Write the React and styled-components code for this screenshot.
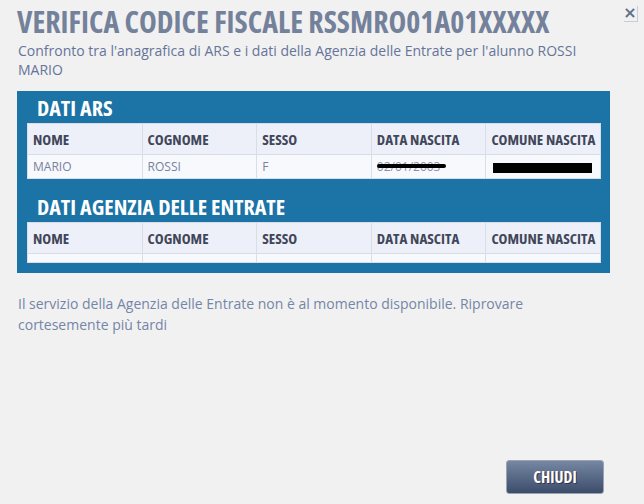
import React from 'react';
import styled, { createGlobalStyle } from 'styled-components';

const GlobalStyle = createGlobalStyle`
  html, body {
    margin: 0;
    padding: 0;
    background: #f1f1f1;
  }
  body {
    font-family: "Open Sans", "Liberation Sans", sans-serif;
  }
`;

const Dialog = styled.div`
  width: 644px;
  height: 504px;
  box-sizing: border-box;
  padding: 3px 17px 0 17px;
  display: flex;
  flex-direction: column;
  position: relative;
`;

const Condensed = `
  font-family: "Open Sans", "DejaVu Sans Condensed", sans-serif;
  font-stretch: 75%;
  font-weight: 700;
`;

const Title = styled.h1`
  ${Condensed};
  margin: 0;
  font-size: 30px;
  line-height: 38px;
  color: #74819a;
`;

const CloseButton = styled.button`
  position: absolute;
  top: 5px;
  right: 7px;
  width: 14px;
  height: 16px;
  padding: 0;
  border: none;
  background: transparent;
  box-shadow: 1px 1px 0 #c9cdd6;
  color: #5f6f8a;
  font-family: "DejaVu Sans", sans-serif;
  font-weight: 700;
  font-size: 16px;
  line-height: 14px;
`;

const Subtitle = styled.p`
  margin: 0 0 12px 1px;
  font-size: 14px;
  line-height: 19px;
  color: #66749a;
  padding-right: 20px;
`;

const BluePanel = styled.div`
  width: 593px;
  background: #1b73a6;
  padding: 0 10px 10px 10px;
  box-sizing: border-box;
`;

const SectionTitle = styled.h2`
  ${Condensed};
  margin: 0;
  padding-left: 10px;
  font-size: 22px;
  line-height: 32px;
  color: #fff;
  margin-top: ${(p) => (p.$gap ? '11px' : '0')};
`;

const Table = styled.table`
  width: 574px;
  border-collapse: collapse;
  table-layout: fixed;
`;

const Th = styled.th`
  ${Condensed};
  text-align: left;
  font-size: 15px;
  height: 30px;
  padding: 0 5px;
  color: #41465a;
  background: #edf0f8;
  border: 1px solid #d9dde8;
  white-space: nowrap;
`;

const Td = styled.td`
  font-size: 12px;
  height: ${(p) => (p.$empty ? '8px' : '23px')};
  padding: 0 5px;
  color: #77819f;
  background: #f8f9fc;
  border: 1px solid #dadee8;
  white-space: nowrap;
`;

const Strike = styled.span`
  position: relative;
  color: #8a93ae;
  &::after {
    content: '';
    position: absolute;
    left: 0;
    right: -6px;
    top: 6px;
    height: 4px;
    border-radius: 2px;
    background: #000;
  }
`;

const Redacted = styled.span`
  display: inline-block;
  width: 99px;
  height: 10px;
  background: #000;
  margin-left: 2px;
  vertical-align: middle;
`;

const Message = styled.p`
  margin: 20px 0 0 1px;
  font-size: 14px;
  line-height: 21px;
  color: #7585a8;
  padding-right: 100px;
`;

const Footer = styled.div`
  margin-top: auto;
  display: flex;
  justify-content: flex-end;
  padding: 0 23px 10px 0;
`;

const Button = styled.button`
  ${Condensed};
  width: 98px;
  height: 34px;
  border: 1px solid #9aa3b2;
  border-radius: 3px;
  background: linear-gradient(to bottom, #7587a2, #3c4c6b);
  color: #fff;
  font-size: 16px;
  text-shadow: 1px 1px 0 #30384a, -1px 0 0 rgba(255,0,0,0.15);
  cursor: pointer;
`;

const columns = ['NOME', 'COGNOME', 'SESSO', 'DATA NASCITA', 'COMUNE NASCITA'];

const HeaderRow = () => (
  <tr>
    {columns.map((c) => (
      <Th key={c}>{c}</Th>
    ))}
  </tr>
);

const App = () => {
  return (
    <>
      <GlobalStyle />
      <Dialog>
        <CloseButton>×</CloseButton>
        <Title>VERIFICA CODICE FISCALE RSSMRO01A01XXXXX</Title>
        <Subtitle>
          Confronto tra l'anagrafica di ARS e i dati della Agenzia delle Entrate per l'alunno ROSSI MARIO
        </Subtitle>
        <BluePanel>
          <SectionTitle>DATI ARS</SectionTitle>
          <Table>
            <thead>
              <HeaderRow />
            </thead>
            <tbody>
              <tr>
                <Td>MARIO</Td>
                <Td>ROSSI</Td>
                <Td>F</Td>
                <Td>
                  <Strike>02/01/2003</Strike>
                </Td>
                <Td>
                  <Redacted />
                </Td>
              </tr>
            </tbody>
          </Table>
          <SectionTitle $gap>DATI AGENZIA DELLE ENTRATE</SectionTitle>
          <Table>
            <thead>
              <HeaderRow />
            </thead>
            <tbody>
              <tr>
                {columns.map((c) => (
                  <Td key={c} $empty />
                ))}
              </tr>
            </tbody>
          </Table>
        </BluePanel>
        <Message>
          Il servizio della Agenzia delle Entrate non è al momento disponibile. Riprovare cortesemente più tardi
        </Message>
        <Footer>
          <Button>CHIUDI</Button>
        </Footer>
      </Dialog>
    </>
  );
};

export default App;
